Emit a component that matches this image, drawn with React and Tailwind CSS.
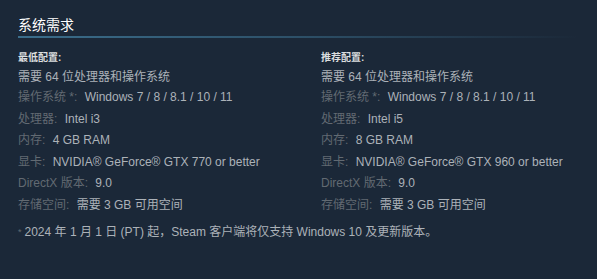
export default function App() {
  const min = [
    ["操作系统 *:", "Windows 7 / 8 / 8.1 / 10 / 11"],
    ["处理器:", "Intel i3"],
    ["内存:", "4 GB RAM"],
    ["显卡:", "NVIDIA® GeForce® GTX 770 or better"],
    ["DirectX 版本:", "9.0"],
    ["存储空间:", "需要 3 GB 可用空间"],
  ];
  const rec = [
    ["操作系统 *:", "Windows 7 / 8 / 8.1 / 10 / 11"],
    ["处理器:", "Intel i5"],
    ["内存:", "8 GB RAM"],
    ["显卡:", "NVIDIA® GeForce® GTX 960 or better"],
    ["DirectX 版本:", "9.0"],
    ["存储空间:", "需要 3 GB 可用空间"],
  ];
  const Col = ({ title, rows }) => (
    <div className="flex flex-col">
      <div className="text-[10px] font-bold text-[#dcdedf] leading-[14px] h-[14px] mb-[3px]">{title}</div>
      <div className="leading-[19px]">需要 64 位处理器和操作系统</div>
      {rows.map(([k, v]) => (
        <div key={k} className="leading-[21.6px] whitespace-nowrap">
          <span className="text-[#626a72]">{k}</span> <span className="ml-[4px]">{v}</span>
        </div>
      ))}
    </div>
  );
  return (
    <div
      className="w-[597px] h-[279px] bg-[#1b2838] px-[18px] pt-[15px] text-[12px] text-[#acb2b8]"
      style={{ fontFamily: '"Liberation Sans", Arial, "Noto Sans CJK SC", sans-serif' }}
    >
      <div className="text-[14px] text-white leading-[20px] pb-[1px]">系统需求</div>
      <div className="h-[2px] w-full bg-gradient-to-r from-[#3b6e8c] via-[#2d5068] to-transparent mb-[13px]" />
      <div className="grid grid-cols-[303px_1fr]">
        <Col title="最低配置:" rows={min} />
        <Col title="推荐配置:" rows={rec} />
      </div>
      <div className="mt-[5px] leading-[20px] whitespace-nowrap">
        <span className="text-[9px] text-[#626a72] align-top mr-[3px]">*</span>
        2024 年 1 月 1 日 (PT) 起，Steam 客户端将仅支持 Windows 10 及更新版本。
      </div>
    </div>
  );
}
